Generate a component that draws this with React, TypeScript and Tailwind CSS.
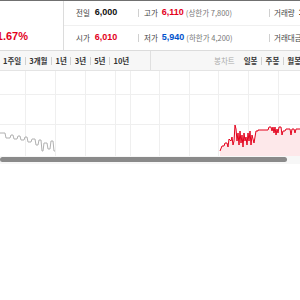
import React from "react";

const red = "#e3001b";
const blue = "#0052cc";
const num = { fontFamily: '"Liberation Sans", Arial, sans-serif' };

function Sep({ m = "mx-[3.5px]" }: { m?: string }) {
  return <span className={`${m} inline-block h-[8px] w-px shrink-0 bg-[#d0d0d0]`} />;
}

function Row({
  l1,
  v1,
  c1,
  l2,
  v2,
  c2,
  p2,
  l3,
  v3,
  border,
}: {
  l1: string;
  v1: string;
  c1: string;
  l2: string;
  v2: string;
  c2: string;
  p2: string;
  l3: string;
  v3?: string;
  border?: boolean;
}) {
  return (
    <div
      className={`flex h-[25px] items-center whitespace-nowrap ${border ? "border-b border-[#f0f0f0]" : "flex-1"}`}
    >
      <div className="flex w-[74px] shrink-0 items-center pl-[12px]">
        <span className="text-[7.5px] text-[#444]">{l1}</span>
        <span className="ml-[5px] text-[9px] font-bold" style={{ ...num, color: c1 }}>
          {v1}
        </span>
      </div>
      <Sep m="mr-[5px]" />
      <div className="flex w-[125px] shrink-0 items-center">
        <span className="text-[7.5px] text-[#444]">{l2}</span>
        <span className="ml-[4px] text-[9px] font-bold" style={{ ...num, color: c2 }}>
          {v2}
        </span>
        <span className="ml-[2px] text-[7.5px] text-[#777]">{p2}</span>
      </div>
      <Sep m="mr-[4px]" />
      <span className="text-[7.5px] text-[#444]">{l3}</span>
      {v3 && (
        <span className="ml-[4px] text-[9px] font-bold text-[#111]" style={num}>
          {v3}
        </span>
      )}
    </div>
  );
}

export default function App() {
  const gx = [25.5, 55.5, 85.5, 115.5, 130.5, 159.5, 189.5, 218.5, 248.5, 278.5];
  const gray =
    "0,62 5,62 6,67 10,67 11,64 13,64 14,68 17,68 18,65 20,65 21,69 24,69 25,66 27,66 28,71 31,71 32,68 35,68 36,74 38,74 39,69 41,69 42,80 43,80 44,72 47,72 48,78 50,78 51,70 53,70 54,80 55,80";
  const redPts =
    "220,80 222,75 224,75 225,72 227,72 228,76 229,68 231,70 232,66 233,74 234,70 235,54 236,58 237,70 238,62 239,74 240,60 241,72 242,64 243,76 244,62 245,70 246,66 247,74 248,62 249,70 250,60 251,74 252,64 253,68 254,72 255,66 256,60 258,60 258,59 268,59 269,56 271,56 272,60 273,56 274,62 275,56 276,64 277,58 278,62 279,56 281,56 282,64 283,60 285,60 286,58 290,58 291,64 292,58 294,58 295,62 296,58 300,58";
  const redFill = `${redPts} 300,85 220,85`;
  return (
    <div
      className="relative h-[300px] w-[300px] overflow-hidden bg-white text-[#333]"
      style={{ fontFamily: '"Noto Sans CJK KR", "Noto Sans", sans-serif' }}
    >
      <div className="h-px bg-[#707070]" />
      {/* info */}
      <div className="flex h-[50px] border-b border-[#dcdcdc]">
        <div className="flex w-[64px] shrink-0 items-end justify-end border-r border-[#dcdcdc] pb-[8px] pr-[35px]">
          <span className="text-[11px] font-bold leading-none" style={{ ...num, color: red }}>
            1.67%
          </span>
        </div>
        <div className="flex min-w-0 flex-1 flex-col">
          <Row
            border
            l1="전일"
            v1="6,000"
            c1="#111"
            l2="고가"
            v2="6,110"
            c2={red}
            p2="(상한가 7,800)"
            l3="거래량"
            v3="1"
          />
          <Row
            l1="시가"
            v1="6,010"
            c1={red}
            l2="저가"
            v2="5,940"
            c2={blue}
            p2="(하한가 4,200)"
            l3="거래대금"
          />
        </div>
      </div>
      {/* tabs */}
      <div className="flex h-[20px] border-b border-[#e4e4e4] bg-[#f7f7f7] text-[7.5px] font-bold text-[#333] whitespace-nowrap">
        <div className="flex w-[151px] shrink-0 items-center border-r border-[#e0e0e0] pl-[3px]">
          <span>1주일</span>
          <Sep />
          <span>3개월</span>
          <Sep />
          <span>1년</span>
          <Sep />
          <span>3년</span>
          <Sep />
          <span>5년</span>
          <Sep />
          <span>10년</span>
        </div>
        <div className="flex flex-1 items-center pl-[63px]">
          <span className="font-normal text-[#aaa]">봉차트</span>
          <span className="ml-[9px]">일봉</span>
          <Sep />
          <span>주봉</span>
          <Sep />
          <span>월봉</span>
        </div>
      </div>
      {/* chart */}
      <svg width="300" height="85" viewBox="0 0 300 85" className="block">
        <line x1="0" y1="23.5" x2="300" y2="23.5" stroke="#efefef" />
        <line x1="0" y1="53.5" x2="300" y2="53.5" stroke="#efefef" />
        {gx.map((x) => (
          <line key={x} x1={x} y1="0" x2={x} y2="85" stroke="#efefef" />
        ))}
        <polyline points={gray} fill="none" stroke="#b0b0b0" strokeWidth="1" />
        <polygon points={redFill} fill="#fde8ea" />
        <polyline points={redPts} fill="none" stroke="#e3001b" strokeWidth="1" />
      </svg>
      <div className="h-[8px] bg-[#f7f7f7] pt-[1px]">
        <div className="h-[5px] w-[287px] rounded-full bg-[#8a8a8a]" />
      </div>
    </div>
  );
}
